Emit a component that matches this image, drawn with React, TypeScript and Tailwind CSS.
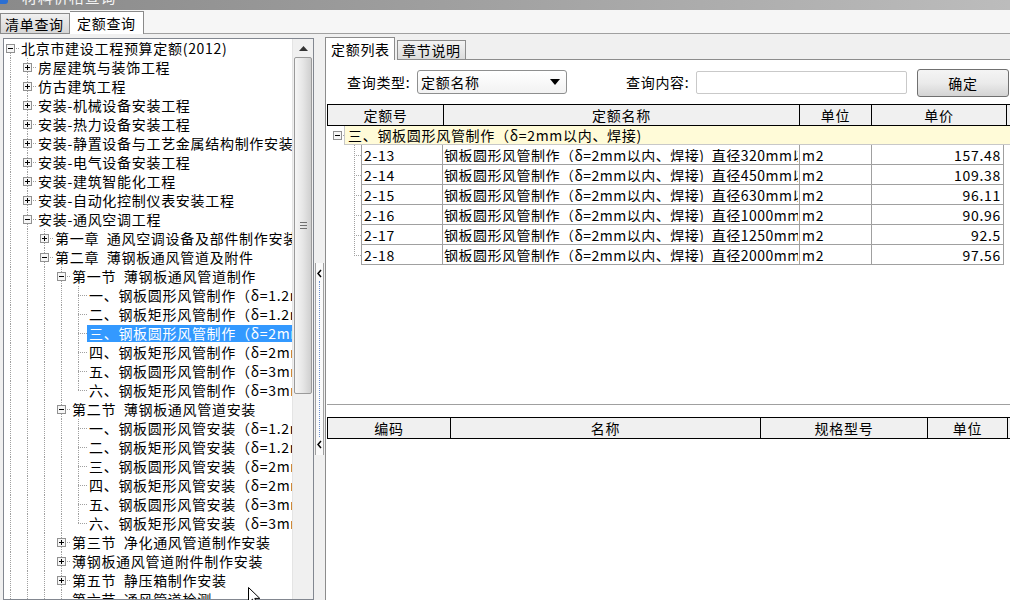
import React from "react";

type TRow = { d: number; t: string; box?: "p" | "m"; last?: boolean; sel?: boolean };

const treeRows: TRow[] = [
  { d: 0, t: "北京市建设工程预算定额(2012)", box: "m" },
  { d: 1, t: "房屋建筑与装饰工程", box: "p" },
  { d: 1, t: "仿古建筑工程", box: "p" },
  { d: 1, t: "安装-机械设备安装工程", box: "p" },
  { d: 1, t: "安装-热力设备安装工程", box: "p" },
  { d: 1, t: "安装-静置设备与工艺金属结构制作安装工程", box: "p" },
  { d: 1, t: "安装-电气设备安装工程", box: "p" },
  { d: 1, t: "安装-建筑智能化工程", box: "p" },
  { d: 1, t: "安装-自动化控制仪表安装工程", box: "p" },
  { d: 1, t: "安装-通风空调工程", box: "m" },
  { d: 2, t: "第一章  通风空调设备及部件制作安装", box: "p" },
  { d: 2, t: "第二章  薄钢板通风管道及附件", box: "m" },
  { d: 3, t: "第一节  薄钢板通风管道制作", box: "m" },
  { d: 4, t: "一、钢板圆形风管制作（δ=1.2mm以内咬口）" },
  { d: 4, t: "二、钢板矩形风管制作（δ=1.2mm以内咬口）" },
  { d: 4, t: "三、钢板圆形风管制作（δ=2mm以内、焊接）", sel: true },
  { d: 4, t: "四、钢板矩形风管制作（δ=2mm以内、焊接）" },
  { d: 4, t: "五、钢板圆形风管制作（δ=3mm以内、焊接）" },
  { d: 4, t: "六、钢板矩形风管制作（δ=3mm以内、焊接）", last: true },
  { d: 3, t: "第二节  薄钢板通风管道安装", box: "m" },
  { d: 4, t: "一、钢板圆形风管安装（δ=1.2mm以内咬口）" },
  { d: 4, t: "二、钢板矩形风管安装（δ=1.2mm以内咬口）" },
  { d: 4, t: "三、钢板圆形风管安装（δ=2mm以内、焊接）" },
  { d: 4, t: "四、钢板矩形风管安装（δ=2mm以内、焊接）" },
  { d: 4, t: "五、钢板圆形风管安装（δ=3mm以内、焊接）" },
  { d: 4, t: "六、钢板矩形风管安装（δ=3mm以内、焊接）", last: true },
  { d: 3, t: "第三节  净化通风管道制作安装", box: "p" },
  { d: 3, t: "薄钢板通风管道附件制作安装", box: "p" },
  { d: 3, t: "第五节  静压箱制作安装", box: "p" },
  { d: 3, t: "第六节  通风管道检测" },
];

const flat = (() => {
  const cont: boolean[] = [];
  return treeRows.map((r, i) => {
    const anc = cont.slice(0, r.d);
    cont[r.d] = !r.last;
    cont.length = r.d + 1;
    return { r, anc, first: i === 0 };
  });
})();

const DOT = "#a0a0a0";

function Box({ x, kind }: { x: number; kind: "p" | "m" }) {
  return (
    <>
      <rect x={x - 4 + 0.5} y={5.5} width={8} height={8} fill="#f6f6f6" stroke="#919191" />
      <line x1={x - 2} x2={x + 3} y1={9.5} y2={9.5} stroke="#000" />
      {kind === "p" && <line x1={x + 0.5} x2={x + 0.5} y1={7} y2={12} stroke="#000" />}
    </>
  );
}

function TreeRow({ r, anc, first }: { r: TRow; anc: boolean[]; first: boolean }) {
  const xd = 6 + 17 * r.d;
  const W = xd + 9;
  return (
    <div className="flex h-[19px] shrink-0 items-center whitespace-pre">
      <svg width={W} height={19} className="shrink-0" shapeRendering="crispEdges">
        {anc.map((c, a) =>
          c ? (
            <line key={a} x1={6 + 17 * a + 0.5} x2={6 + 17 * a + 0.5} y1={0} y2={19} stroke={DOT} strokeDasharray="1 1" />
          ) : null
        )}
        {!first && <line x1={xd + 0.5} x2={xd + 0.5} y1={0} y2={10} stroke={DOT} strokeDasharray="1 1" />}
        {!r.last && <line x1={xd + 0.5} x2={xd + 0.5} y1={10} y2={19} stroke={DOT} strokeDasharray="1 1" />}
        <line x1={xd} x2={xd + 9} y1={9.5} y2={9.5} stroke={DOT} strokeDasharray="1 1" />
        {r.box && <Box x={xd} kind={r.box} />}
      </svg>
      <span className={r.sel ? "px-[2px] leading-[17px] bg-[#3399ff] text-white" : "px-[2px] leading-[17px]"}>{r.t}</span>
    </div>
  );
}

const items = [
  { code: "2-13", size: "320", price: "157.48" },
  { code: "2-14", size: "450", price: "109.38" },
  { code: "2-15", size: "630", price: "96.11" },
  { code: "2-16", size: "1000", price: "90.96" },
  { code: "2-17", size: "1250", price: "92.5" },
  { code: "2-18", size: "2000", price: "97.56" },
];

function Chevron() {
  return (
    <svg width={7} height={9} className="shrink-0">
      <polyline points="5,1 2,4.5 5,8" fill="none" stroke="#000" strokeWidth={1.5} />
    </svg>
  );
}

export default function App() {
  return (
    <div className="relative w-[1010px] h-[600px] overflow-hidden bg-[#f0f0f0] text-black text-[14px] tracking-[0.7px] font-['Noto_Sans_CJK_SC',sans-serif] flex flex-col">
      {/* title strip */}
      <div className="h-[10px] shrink-0 overflow-hidden flex bg-gradient-to-r from-[#8a8a8a] via-[#a2a2a2] to-[#bcbcbc]">
        <div className="w-[8px] h-[4px] bg-[#2b6fd3] rounded-br-[3px]" />
        <div className="ml-[14px] -mt-[12px] text-[#f4f4f4] text-[15px] leading-[17px] whitespace-nowrap">材料价格查询</div>
      </div>

      {/* top tabs */}
      <div className="h-[24px] shrink-0 flex items-end bg-[#f6f6f6]">
        <div className="h-[21px] w-[70px] border border-[#8a8a8a] bg-gradient-to-b from-[#f0f0f0] to-[#d6d6d6] flex items-center pl-[4px] leading-none whitespace-nowrap">
          清单查询
        </div>
        <div className="h-[23px] w-[74px] border-t border-r border-[#8a8a8a] bg-white flex items-center pl-[7px] leading-none whitespace-nowrap">
          定额查询
        </div>
        <div className="flex-1 h-full border-b border-[#a0a0a0]" />
      </div>

      {/* main */}
      <div className="flex-1 flex min-h-0">
        {/* tree panel */}
        <div className="ml-[3px] mt-[4px] w-[311px] border border-[#828790] bg-white flex min-h-0">
          <div className="w-[288px] overflow-hidden flex flex-col">
            {flat.map((f, i) => (
              <TreeRow key={i} r={f.r} anc={f.anc} first={f.first} />
            ))}
          </div>
          {/* scrollbar */}
          <div className="w-[21px] bg-[#f0f0f0] flex flex-col border-l border-[#e4e4e4]">
            <div className="h-[18px] flex items-center justify-center">
              <svg width={9} height={5}>
                <polygon points="0,5 4.5,0 9,5" fill="#333" />
              </svg>
            </div>
            <div className="h-[337px] mx-[1px] rounded-[2px] border border-[#9a9a9a] bg-gradient-to-r from-[#f6f6f6] via-[#e6e6e6] to-[#cfcfcf] flex flex-col items-center justify-center gap-[2px]">
              <div className="w-[7px] h-[1px] bg-[#707070]" />
              <div className="w-[7px] h-[1px] bg-[#707070]" />
              <div className="w-[7px] h-[1px] bg-[#707070]" />
            </div>
            <div className="flex-1" />
          </div>
        </div>

        {/* splitter */}
        <div className="w-[11px] flex flex-col">
          <div className="h-[229px]" />
          <div className="ml-[1px] w-[9px] h-[192px] border-x border-[#a0a0a0] bg-[#fafafa] flex flex-col items-center py-[6px]">
            <Chevron />
            <div className="flex-1 my-[3px] border-l border-dotted border-[#6a8fd0]" />
            <Chevron />
          </div>
        </div>

        {/* right panel */}
        <div className="flex-1 flex flex-col min-w-0">
          <div className="mt-[3px] h-[23px] shrink-0 flex items-end">
            <div className="h-[23px] w-[70px] border-x border-t border-[#8c8c8c] bg-white flex items-center pl-[5px] leading-none whitespace-nowrap">
              定额列表
            </div>
            <div className="ml-[2px] h-[20px] w-[69px] border border-[#8c8c8c] bg-gradient-to-b from-[#f3f3f3] to-[#dcdcdc] flex items-center pl-[4px] leading-none whitespace-nowrap">
              章节说明
            </div>
            <div className="flex-1 h-full border-b border-[#8c8c8c]" />
          </div>

          <div className="flex-1 bg-white border-l border-[#8c8c8c] pl-[1px] flex flex-col min-h-0">
            {/* query row */}
            <div className="h-[44px] shrink-0 flex items-center whitespace-nowrap">
              <div className="w-[90px] pl-[20px] leading-none">查询类型:</div>
              <div className="w-[150px] h-[24px] border border-[#8e8f8f] rounded-[3px] bg-gradient-to-b from-white to-[#f2f2f2] flex items-center pl-[3px] pr-[6px]">
                <span className="flex-1 leading-none">定额名称</span>
                <svg width={10} height={6}>
                  <polygon points="0,0 10,0 5,6" fill="#000" />
                </svg>
              </div>
              <div className="ml-[59px] w-[70px] leading-none">查询内容:</div>
              <div className="w-[211px] h-[23px] border border-[#c9c9c9] rounded-[2px] bg-white" />
              <div className="ml-[10px] mt-[1px] w-[92px] h-[28px] border border-[#707070] rounded-[3px] bg-gradient-to-b from-[#f4f4f4] via-[#ebebeb] to-[#d4d4d4] flex items-center justify-center leading-none">
                确定
              </div>
            </div>

            {/* grid 1 */}
            <div className="h-[301px] shrink-0 border-b border-[#a0a0a0] flex flex-col overflow-hidden">
              <div className="h-[22px] shrink-0 flex border-y border-black bg-[#f0f0f0] whitespace-nowrap leading-none">
                <div className="w-[117px] border-x border-black flex items-center justify-center">定额号</div>
                <div className="w-[356px] border-r border-black flex items-center justify-center">定额名称</div>
                <div className="w-[72px] border-r border-black flex items-center justify-center">单位</div>
                <div className="w-[135px] border-r border-black flex items-center justify-center">单价</div>
                <div className="flex-1" />
              </div>
              {/* group row */}
              <div className="h-[19px] shrink-0 flex">
                <svg width={17} height={19} className="shrink-0" shapeRendering="crispEdges">
                  <line x1={10} x2={17} y1={9.5} y2={9.5} stroke={DOT} strokeDasharray="1 1" />
                  <Box x={10} kind="m" />
                </svg>
                <div className="flex-1 bg-[#fffbd8] border-l border-b border-[#c8c8c8] flex items-center pl-[3px] whitespace-pre leading-none">
                  三、钢板圆形风管制作（δ=2mm以内、焊接)
                </div>
              </div>
              {items.map((it, i) => {
                const last = i === items.length - 1;
                return (
                  <div key={it.code} className="h-[20px] shrink-0 flex whitespace-pre leading-none">
                    <svg width={34} height={20} className="shrink-0" shapeRendering="crispEdges">
                      <line x1={27.5} x2={27.5} y1={0} y2={last ? 10 : 20} stroke={DOT} strokeDasharray="1 1" />
                      <line x1={27} x2={34} y1={10.5} y2={10.5} stroke={DOT} strokeDasharray="1 1" />
                    </svg>
                    <div className="w-[82px] border-x border-b border-[#a0a0a0] flex items-center pl-[2px]">{it.code}</div>
                    <div className="w-[357px] border-r border-b border-[#a0a0a0] flex items-center pl-[1px] overflow-hidden tracking-[0.5px]">
                      <span className="block w-[354px] overflow-hidden">{"钢板圆形风管制作（δ=2mm以内、焊接)  直径" + it.size + "mm以内"}</span>
                    </div>
                    <div className="w-[72px] border-r border-b border-[#a0a0a0] flex items-center pl-[2px]">m2</div>
                    <div className="w-[132px] border-r border-b border-[#a0a0a0] flex items-center justify-end pr-[2px]">{it.price}</div>
                  </div>
                );
              })}
            </div>

            {/* grid 2 */}
            <div className="mt-[12px] h-[22px] shrink-0 flex border-y border-black bg-[#f0f0f0] whitespace-nowrap leading-none">
              <div className="w-[124px] border-x border-black flex items-center justify-center">编码</div>
              <div className="w-[310px] border-r border-black flex items-center justify-center">名称</div>
              <div className="w-[167px] border-r border-black flex items-center justify-center">规格型号</div>
              <div className="w-[80px] border-r border-black flex items-center justify-center">单位</div>
              <div className="flex-1" />
            </div>
            <div className="flex-1 bg-white" />
          </div>
        </div>
      </div>

      {/* mouse cursor */}
      <svg className="absolute left-[248px] top-[587px]" width={13} height={20}>
        <path d="M0.5,0.5 L0.5,16 L4.5,12.2 L7.2,18.5 L9.4,17.6 L6.8,11.4 L11.8,11.4 Z" fill="#fff" stroke="#000" strokeWidth={1} />
      </svg>
    </div>
  );
}
